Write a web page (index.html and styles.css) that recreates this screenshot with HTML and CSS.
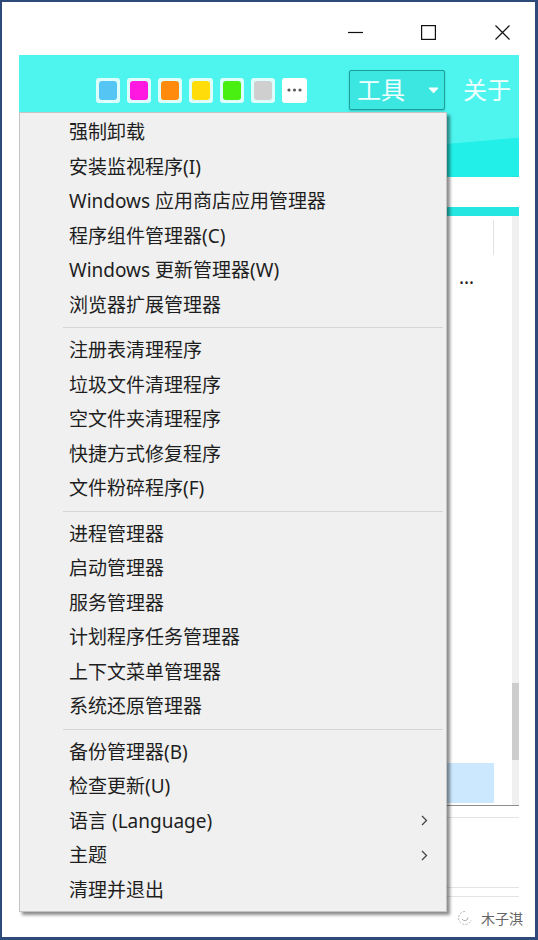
FILE: index.html
```html
<!DOCTYPE html>
<html>
<head>
<meta charset="utf-8">
<title>工具菜单</title>
<link rel="stylesheet" href="styles.css">
</head>
<body>
<div class="frame">
<div class="titlebar">
<span class="winbtn"><svg width="15" height="15" viewBox="0 0 15 15"><path d="M0 7.5H15" stroke="#111" stroke-width="1.2" fill="none"/></svg></span>
<span class="winbtn"><svg width="15" height="15" viewBox="0 0 15 15"><rect x="0.6" y="0.6" width="13.8" height="13.8" stroke="#111" stroke-width="1.2" fill="none"/></svg></span>
<span class="winbtn"><svg width="15" height="15" viewBox="0 0 15 15"><path d="M0.5 0.5L14.5 14.5M14.5 0.5L0.5 14.5" stroke="#111" stroke-width="1.2" fill="none"/></svg></span>
</div>
<div class="app">
<div class="header">
<div class="toolbar">
<div class="swatches">
<span class="swatch"><i class="c1"></i></span>
<span class="swatch"><i class="c2"></i></span>
<span class="swatch"><i class="c3"></i></span>
<span class="swatch"><i class="c4"></i></span>
<span class="swatch"><i class="c5"></i></span>
<span class="swatch"><i class="c6"></i></span>
<span class="swatch more"><svg width="15" height="4" viewBox="0 0 15 4"><circle cx="2" cy="2" r="1.6" fill="#5a5a5a"/><circle cx="7.5" cy="2" r="1.6" fill="#5a5a5a"/><circle cx="13" cy="2" r="1.6" fill="#5a5a5a"/></svg></span>
</div>
<div class="dropdown">
<span>工具</span>
<svg width="11" height="7" viewBox="0 0 11 7"><path d="M1 1H10L5.5 6Z" fill="#f4ffff" stroke="#f4ffff" stroke-linejoin="round"/></svg>
</div>
<span class="about">关于</span>
</div>
</div>
<div class="tabline"></div>
<div class="listwrap">
<div class="list">
<div class="list-head"><div class="col-a"></div></div>
<div class="row"><div class="col-a name">…</div></div>
<div class="fill"></div>
<div class="row sel"><div class="col-a"></div></div>
</div>
<div class="scrollbar"><div class="thumb"></div></div>
</div>
<div class="footer">
<div class="fline"></div>
<div class="fline low"></div>
<div class="fline thin"></div>
</div>
</div>

<div class="menu">
<div class="item">强制卸载</div>
<div class="item">安装监视程序(I)</div>
<div class="item">Windows 应用商店应用管理器</div>
<div class="item">程序组件管理器(C)</div>
<div class="item">Windows 更新管理器(W)</div>
<div class="item">浏览器扩展管理器</div>
<div class="sep"></div>
<div class="item">注册表清理程序</div>
<div class="item">垃圾文件清理程序</div>
<div class="item">空文件夹清理程序</div>
<div class="item">快捷方式修复程序</div>
<div class="item">文件粉碎程序(F)</div>
<div class="sep"></div>
<div class="item">进程管理器</div>
<div class="item">启动管理器</div>
<div class="item">服务管理器</div>
<div class="item">计划程序任务管理器</div>
<div class="item">上下文菜单管理器</div>
<div class="item">系统还原管理器</div>
<div class="sep"></div>
<div class="item">备份管理器(B)</div>
<div class="item">检查更新(U)</div>
<div class="item sub"><span>语言 (Language)</span><svg width="7" height="11" viewBox="0 0 7 11"><path d="M1 1L5.5 5.5L1 10" stroke="#444" stroke-width="1.3" fill="none"/></svg></div>
<div class="item sub"><span>主题</span><svg width="7" height="11" viewBox="0 0 7 11"><path d="M1 1L5.5 5.5L1 10" stroke="#444" stroke-width="1.3" fill="none"/></svg></div>
<div class="item">清理并退出</div>
</div>

<div class="watermark">
<svg width="16" height="16" viewBox="0 0 16 16"><path d="M8 1.5A6.5 6.5 0 1 0 14.3 10" stroke="#b5b5b5" stroke-width="1" stroke-dasharray="2 1.4" fill="none"/><path d="M5 9A3.2 3.2 0 0 0 11 7.5" stroke="#a8a8a8" stroke-width="1" fill="none"/></svg>
<span>木子淇</span>
</div>
</div>
</body>
</html>
```

FILE: styles.css
```css
*{
margin: 0;
padding: 0;
box-sizing: border-box;
}
body{
width: 538px;
height: 940px;
background: #fff;
font-family: "Noto Sans", "Noto Sans CJK SC", sans-serif;
}
.frame{
position: relative;
width: 538px;
height: 940px;
border: 2px solid #2d4a78;
border-right-width: 3px;
border-bottom-width: 3px;
background: #fff;
overflow: hidden;
}
.titlebar{
height: 53px;
display: flex;
justify-content: flex-end;
align-items: flex-start;
gap: 43.5px;
padding-right: 18px;
padding-top: 23px;
}
.winbtn{
width: 30px;
height: 15px;
display: flex;
justify-content: center;
}
.app{
margin-left: 17px;
width: 500px;
}
.header{
height: 122px;
background: linear-gradient(175deg, #4ef5ef 0%, #4ef5ef 76%, #22efe8 76.5%, #22efe8 99%, #2bd8d2 100%);
}
.toolbar{
height: 70px;
display: flex;
align-items: center;
padding-left: 77px;
}
.swatches{
display: flex;
gap: 7px;
}
.swatch{
width: 24px;
height: 25px;
padding: 3px;
border-radius: 3px;
background: #dcfffd;
display: block;
}
.swatch i{
display: block;
width: 100%;
height: 100%;
border-radius: 3px;
}
.c1{ background: #55c6f4; }
.c2{ background: #ff18df; }
.c3{ background: #ff8a0c; }
.c4{ background: #ffdc0a; }
.c5{ background: #48ef10; }
.c6{ background: #cfcfcf; }
.swatch.more{
width: 25px;
background: #fff;
display: flex;
align-items: center;
justify-content: center;
}
.dropdown{
margin-left: 42px;
width: 96px;
height: 40px;
border: 1px solid #1c9e99;
border-radius: 2px;
background: #3ce6e1;
box-shadow: 0 1px 2px rgba(0,90,90,0.35);
display: flex;
align-items: center;
justify-content: space-between;
padding: 0 5px 0 7px;
color: #f0ffff;
font-size: 24px;
}
.dropdown span{
line-height: 1;
}
.about{
margin-left: 18px;
color: #f0ffff;
font-size: 24px;
line-height: 1;
}
.tabline{
margin-top: 30px;
height: 9px;
background: #25e6e0;
}
.listwrap{
height: 589px;
display: flex;
}
.list{
flex: 1;
display: flex;
flex-direction: column;
}
.list-head{
height: 38px;
padding-top: 4px;
}
.list-head .col-a{
height: 35px;
border-right: 1px solid #e2e2e2;
}
.col-a{
width: 475px;
}
.row{
height: 46px;
display: flex;
align-items: center;
}
.name{
padding-right: 20px;
font-size: 19px;
line-height: 1;
color: #222;
text-align: right;
}
.fill{
flex: 1;
}
.row.sel{
height: 40px;
margin-bottom: 2px;
}
.row.sel .col-a{
height: 40px;
background: #cce8ff;
}
.scrollbar{
width: 7px;
background: #f0f0f0;
padding-top: 467px;
}
.thumb{
height: 77px;
background: #cdcdcd;
}
.footer{
border-top: 1px solid #8f8f8f;
height: 100px;
padding-top: 11px;
}
.fline{
height: 1px;
background: #e4e4e4;
}
.fline.low{
margin-top: 69px;
}
.fline.thin{
margin-top: 8px;
}
.menu{
position: absolute;
left: 17px;
top: 110px;
width: 428px;
background: #f0f0f0;
border: 1px solid #c4c4c4;
box-shadow: 3px 3px 3px rgba(0,0,0,0.45);
padding: 2px 0 4px 0;
color: #1e1e1e;
font-size: 19px;
}
.item{
height: 34.5px;
line-height: 34.5px;
padding-left: 49px;
white-space: nowrap;
}
.item.sub{
display: flex;
justify-content: space-between;
align-items: center;
padding-right: 18px;
}
.sep{
height: 11px;
margin: 0 3px 0 43px;
padding-top: 5px;
}
.sep::before{
content: '';
display: block;
height: 1px;
background: #d6d6d6;
}
.watermark{
position: absolute;
left: 455px;
top: 906px;
display: flex;
align-items: center;
gap: 8px;
color: #666;
font-size: 14px;
}
```
